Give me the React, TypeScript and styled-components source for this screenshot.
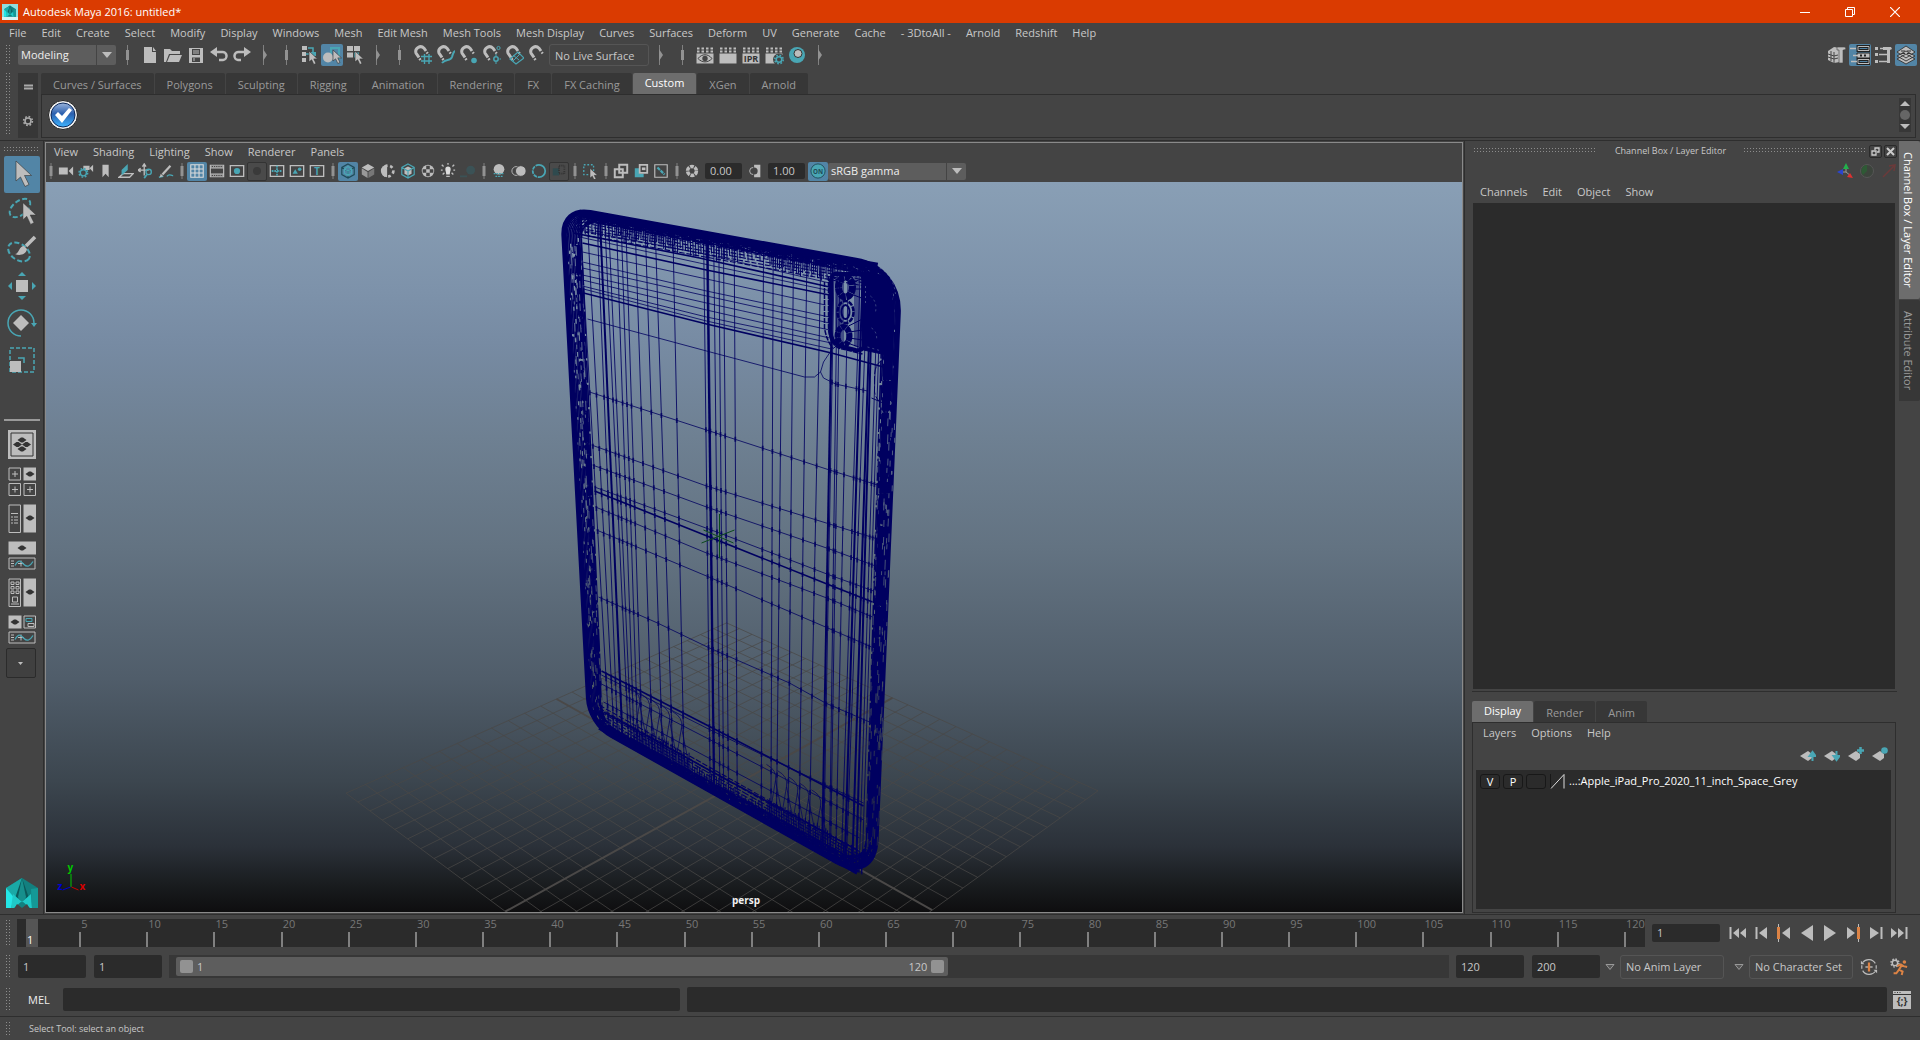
import React from "react";
import styled, { createGlobalStyle, css } from "styled-components";

const C = {
  bg: "#444444",
  dark: "#2b2b2b",
  mid: "#373737",
  raised: "#5d5d5d",
  active: "#5285a6",
  text: "#c8c8c8",
  dim: "#9a9a9a",
  icon: "#bdbdbd",
  teal: "#49a6b4",
  orange: "#dc8345",
  line: "#2e2e2e",
  wire: "#000060",
};

const Global = createGlobalStyle`
  * { box-sizing: border-box; }
  body { margin: 0; background: ${C.bg}; }
  body, button, input, select { font: 11px/16px "Open Sans", "Noto Sans", sans-serif; color: ${C.text}; }
  button, input, select { margin: 0; padding: 0; border: 0; background: none; outline: none; }
  button { cursor: default; }
  svg { display: block; }
`;

const Shell = styled.div`
  display: flex;
  flex-direction: column;
  height: 100vh;
  overflow: hidden;
  background: ${C.bg};
`;

const TitleBar = styled.header`
  display: flex;
  align-items: center;
  gap: 5px;
  height: 23px;
  padding: 0 3px 0 2px;
  background: #da3b01;
  color: #ffffff;
`;
const TitleText = styled.h1`
  flex: 1;
  margin: 0;
  font-size: 11px;
  font-weight: 400;
`;
const WindowButtons = styled.div`
  display: flex;
`;
const WindowButton = styled.button`
  display: grid;
  place-items: center;
  width: 45px;
  height: 20px;
`;

const MenuBar = styled.nav<{ $h?: number; $pad?: number }>`
  display: flex;
  align-items: center;
  gap: 15px;
  height: ${(p) => p.$h ?? 20}px;
  padding-left: ${(p) => p.$pad ?? 9}px;
`;
const MenuItem = styled.button`
  white-space: nowrap;
`;

const Row = styled.div<{ $h: number; $gap?: number; $rule?: boolean }>`
  display: flex;
  align-items: center;
  gap: ${(p) => p.$gap ?? 0}px;
  height: ${(p) => p.$h}px;
  flex: none;
  padding-right: 3px;
  border-top: ${(p) => (p.$rule ? `1px solid ${C.line}` : "0")};
`;

const dots = css`
  background: radial-gradient(circle at 0.5px 0.5px, #8c8c8c 0.5px, transparent 1px) 0 0 / 3px 3px;
`;
const Grip = styled.span<{ $h?: number }>`
  flex: none;
  width: 5px;
  height: ${(p) => p.$h ?? 20}px;
  margin: 0 6px;
  ${dots}
`;
const HGrip = styled.span`
  flex: 1;
  height: 6px;
  ${dots}
`;

const IconButton = styled.button<{ $on?: boolean; $size?: number; $w?: number }>`
  display: grid;
  place-items: center;
  flex: none;
  width: ${(p) => p.$w ?? 22}px;
  height: ${(p) => p.$size ?? 22}px;
  border-radius: 2px;
  background: ${(p) => (p.$on ? C.active : "none")};
`;

const SepBox = styled.span<{ $w: number }>`
  display: grid;
  place-items: center;
  flex: none;
  width: ${(p) => p.$w}px;
`;

const SelectBox = styled.span<{ $w: number; $h: number }>`
  position: relative;
  display: flex;
  flex: none;
  width: ${(p) => p.$w}px;
  height: ${(p) => p.$h}px;
  border-radius: 2px;
  background: ${C.raised};
  select {
    appearance: none;
    flex: 1;
    padding-left: 3px;
    color: #eeeeee;
  }
  span {
    position: absolute;
    right: 0;
    top: 0;
    display: grid;
    place-items: center;
    width: 20px;
    height: 100%;
    border-left: 1px solid ${C.bg};
    pointer-events: none;
  }
`;

const Field = styled.input<{ $w?: number; $h?: number; $outlined?: boolean }>`
  flex: ${(p) => (p.$w ? "none" : "1")};
  min-width: 0;
  width: ${(p) => (p.$w ? `${p.$w}px` : "auto")};
  height: ${(p) => p.$h ?? 23}px;
  padding: 0 5px;
  border-radius: 2px;
  background: ${C.dark};
  ${(p) =>
    p.$outlined &&
    css`
      background: none;
      border: 1px solid #555555;
      border-radius: 3px;
    `}
`;

const Spacer = styled.span`
  flex: 1;
`;

/* Shelf */
const Shelf = styled.section`
  display: flex;
  flex: none;
  height: 73px;
  padding: 6px 4px 2px 0;
`;
const ShelfSide = styled.div`
  display: flex;
  flex-direction: column;
  align-items: center;
  justify-content: space-between;
  width: 20px;
  margin: 0 3px 0 1px;
  padding: 11px 0;
  background: ${C.mid};
`;
const ShelfBody = styled.div`
  display: flex;
  flex-direction: column;
  flex: 1;
`;
const Tabs = styled.div`
  display: flex;
  align-items: flex-end;
  gap: 1px;
`;
const Tab = styled.button<{ $on?: boolean }>`
  height: 21px;
  padding: ${(p) => (p.$on ? "0 12px 1px" : "2px 12px 0")};
  border-radius: 2px 2px 0 0;
  background: ${(p) => (p.$on ? "#6d6d6d" : C.mid)};
  color: ${(p) => (p.$on ? "#ffffff" : C.dim)};
  white-space: nowrap;
`;
const ShelfBox = styled.div`
  display: flex;
  align-items: center;
  justify-content: space-between;
  flex: 1;
  padding: 0 4px 2px 5px;
  border: 1px solid ${C.line};
`;
const Scroller = styled.div`
  display: flex;
  flex-direction: column;
  align-items: center;
  justify-content: space-between;
  width: 12px;
  height: 34px;
  padding: 3px 0;
  background: ${C.mid};
`;

/* Main area */
const Main = styled.main`
  display: flex;
  flex: 1;
  min-height: 0;
  border-top: 1px solid ${C.line};
`;
const ToolBox = styled.aside`
  display: flex;
  flex-direction: column;
  align-items: center;
  width: 44px;
  padding: 6px 4px 5px;
  border-right: 1px solid ${C.line};
`;
const ToolGrip = styled(HGrip)`
  flex: none;
  width: 36px;
  margin-bottom: 3px;
`;
const Tool = styled.button<{ $on?: boolean }>`
  display: grid;
  place-items: center;
  flex: none;
  width: 36px;
  height: 37px;
  border-radius: 2px;
  background: ${(p) => (p.$on ? C.active : "none")};
`;
const ToolRule = styled.hr`
  width: 36px;
  height: 2px;
  margin: 41px 0 5px;
  border: 0;
  background: #9a9a9a;
`;
const MoreTool = styled(Tool)`
  width: 30px;
  height: 30px;
  border: 1px solid ${C.dark};
  margin-right: 2px;
  background: #404040;
`;

const Panel = styled.section`
  display: flex;
  flex-direction: column;
  flex: 1;
  min-width: 0;
  margin: 1px 0 1px 1px;
  border: 1px solid #8a8a8a;
`;
const PanelTools = styled.div`
  display: flex;
  align-items: center;
  flex: none;
  height: 21px;
  padding-bottom: 1px;
`;
const PanelIcon = styled(IconButton)<{ $framed?: boolean }>`
  width: 20px;
  height: 19px;
  ${(p) =>
    p.$framed &&
    css`
      border: 1px solid #333333;
      background: #4a4a4a;
    `}
`;
const ToolField = styled(Field)`
  width: 37px;
  height: 16px;
  margin: 0 3px;
  flex: none;
`;

const Viewport = styled.div`
  position: relative;
  flex: 1;
  min-height: 0;
  background: linear-gradient(
    #899fb5 0%,
    #7d92aa 15%,
    #778ba3 22%,
    #6e8092 35%,
    #637382 50%,
    #505d6a 68%,
    #3c464f 82%,
    #2b3139 91%,
    #1a1d20 96%,
    #0e0e0f 100%
  );
  svg {
    width: 100%;
    height: 100%;
  }
`;
const CameraName = styled.span`
  position: absolute;
  bottom: 4px;
  left: 0;
  right: 16px;
  text-align: center;
  font-weight: 700;
  font-size: 10px;
  color: #f0f0f0;
`;

/* Right dock */
const Dock = styled.aside`
  display: flex;
  flex-direction: column;
  width: 435px;
  margin-left: 1px;
  padding: 0 2px 1px 7px;
  border-left: 1px solid ${C.line};
`;
const DockHeader = styled.div`
  display: flex;
  align-items: center;
  height: 20px;
  gap: 2px;
  padding-left: 2px;
`;
const DockTitle = styled.h2`
  margin: 0 16px;
  font-size: 9px;
  font-weight: 400;
`;
const DockButton = styled.button`
  display: grid;
  place-items: center;
  width: 13px;
  height: 13px;
  border: 1px solid #2a2a2a;
  border-radius: 2px;
`;
const DockIcons = styled.div<{ $gap: number }>`
  display: flex;
  justify-content: flex-end;
  align-items: center;
  gap: ${(p) => p.$gap}px;
  height: 20px;
`;
const ChannelList = styled.div`
  flex: 1;
  margin: 0 2px 1px 1px;
  background: ${C.dark};
`;
const DockRule = styled.hr`
  width: 100%;
  height: 1px;
  margin: 1px 0 9px;
  border: 0;
  background: ${C.line};
`;
const LayerBox = styled.div`
  display: flex;
  flex-direction: column;
  height: 191px;
  margin-right: 1px;
  padding: 0 4px 3px 3px;
  border: 1px solid ${C.line};
`;
const LayerIcons = styled(DockIcons)`
  height: 27px;
  padding: 0 3px 4px 0;
`;
const LayerList = styled.div`
  flex: 1;
  padding: 3px 4px;
  background: ${C.dark};
`;
const LayerRow = styled.div`
  display: flex;
  align-items: center;
  gap: 3px;
  color: #ffffff;
`;
const LayerFlag = styled.button`
  width: 20px;
  height: 15px;
  line-height: 13px;
  border: 1px solid #181818;
  border-radius: 3px;
  color: #ffffff;
`;

const SideTabs = styled.div`
  display: flex;
  flex-direction: column;
  gap: 1px;
  width: 21px;
`;
const SideTab = styled.button<{ $on?: boolean }>`
  writing-mode: vertical-rl;
  width: 21px;
  padding: 11px 3px 11px 0;
  border-radius: 0 2px 2px 0;
  background: ${(p) => (p.$on ? "#6d6d6d" : C.mid)};
  color: ${(p) => (p.$on ? "#ffffff" : C.dim)};
`;

/* Bottom rows */
const Ruler = styled.div`
  display: grid;
  grid-template-columns: 63fr repeat(23, 67fr) 20fr;
  flex: 1;
  height: 28px;
  margin-right: 7px;
  background: ${C.dark};
`;
const Tick = styled.span`
  display: flex;
  flex-direction: column;
  min-width: 0;
  line-height: 10px;
  padding-left: 1px;
  color: #777777;
  &::after {
    content: "";
    width: 2px;
    height: 15px;
    margin: 3px 0 0 -2px;
    background: #808080;
  }
`;
const CurrentFrame = styled.span`
  width: 12px;
  height: 28px;
  margin-left: 9px;
  padding: 13px 0 0 1px;
  line-height: 15px;
  background: #555555;
  color: #ffffff;
`;
const RangeTrack = styled.div`
  flex: 1;
  height: 23px;
  margin: 0 7px;
  padding: 2px 7px;
  background: ${C.mid};
`;
const RangeBar = styled.div`
  display: flex;
  align-items: center;
  gap: 4px;
  width: 61%;
  height: 19px;
  padding: 0 4px;
  border-radius: 2px;
  background: ${C.raised};
`;
const RangeHandle = styled.button`
  width: 13px;
  height: 13px;
  border-radius: 2px;
  background: #929292;
`;
const Label = styled.label`
  width: 35px;
  margin-left: 11px;
  color: #eeeeee;
`;
const Hint = styled.p`
  margin: 0 0 0 12px;
  font-size: 9px;
`;
const Drop = styled.button`
  display: grid;
  place-items: center;
  width: 20px;
  height: 20px;
`;

/* ---------- icons ---------- */
type IconProps = { w?: number; h?: number; box?: string; children: React.ReactNode };
const Icon = ({ w = 20, h = 20, box, children }: IconProps) => (
  <svg width={w} height={h} viewBox={box ?? `0 0 ${w} ${h}`} fill="none" aria-hidden="true">
    {children}
  </svg>
);
const g = C.icon;
const t = C.teal;

const Bar = () => (
  <Icon w={5} h={20}>
    <path d="M2.5 0v20" stroke="#808080" />
    <path d="M2.5 5v10" stroke="#929292" strokeWidth="3" />
  </Icon>
);
const Fold = () => (
  <Icon w={5} h={20}>
    <path d="M1.5 0v20" stroke="#808080" />
    <path d="M1 4l4 6l-4 6z" fill="#929292" />
  </Icon>
);
const SmallBar = () => (
  <Icon w={4} h={16}>
    <path d="M2 0v16" stroke="#808080" />
    <path d="M2 3v10" stroke="#929292" strokeWidth="3" />
  </Icon>
);
const Down = ({ color = g }: { color?: string }) => (
  <Icon w={10} h={6}>
    <path d="M0 0h10l-5 6z" fill={color} />
  </Icon>
);
const Arrow = ({ x, y }: { x: number; y: number }) => (
  <path
    transform={`translate(${x} ${y})`}
    d="M0 0v11l2.600-2.200 2.200 4.700 2.200-1-2.200-4.600h3.700z"
    fill={g}
    stroke="#333"
    strokeWidth=".6"
  />
);
const Magnet = () => (
  <g transform="translate(1 0)">
    <path d="M6 12.500L3 8A4.800 4.800 0 0 1 11 3.200L13 6" stroke={g} strokeWidth="3" />
    <path d="M6.500 13.500l1 1.500M13.700 7.200l1 1.300" stroke={g} strokeWidth="2.500" />
  </g>
);
const Clap = ({ children }: { children?: React.ReactNode }) => (
  <Icon>
    <path d="M2 3.500h16M2 6.500h16" stroke={g} strokeWidth="2" strokeDasharray="2.500 2" />
    <path d="M1.500 8.500h17v10h-17z" fill={g} />
    {children}
  </Icon>
);
const Cursor = ({ s = 1 }: { s?: number }) => (
  <path
    transform={`scale(${s})`}
    d="M7 2v20l4.500-4 4.500 9.500 4-2-4.500-9h7z"
    fill={g}
    stroke="#333"
    strokeWidth=".6"
  />
);
const Gear = ({ x, y, r, color }: { x: number; y: number; r: number; color: string }) => (
  <g transform={`translate(${x} ${y})`} stroke={color}>
    <circle r={r} strokeWidth="1.600" />
    <circle r={r + 1.4} strokeWidth="1.600" strokeDasharray={`${(r + 1.4) * 0.393} ${(r + 1.4) * 0.393}`} />
  </g>
);
const Glyph = ({ x, y, size, color, children }: { x: number; y: number; size: number; color: string; children: string }) => (
  <text x={x} y={y} textAnchor="middle" fontFamily="Open Sans, sans-serif" fontWeight="700" fontSize={size} fill={color}>
    {children}
  </text>
);

const statusIcons: Record<string, React.ReactNode> = {
  "New scene": <Icon><path d="M4 2h8v5h4v11H4z" fill={g} /><path d="M13 2l3 4h-3z" fill={g} /></Icon>,
  "Open scene": <Icon><path d="M1 4h6l2 2h8v3H6l-3 8H1z" fill={g} /><path d="M7 10h12l-3 7H4z" fill={g} /></Icon>,
  "Save scene": <Icon><path d="M3 3h14v15H3z" fill={g} /><path d="M6 4h8v6H6zM6 12.500h8v4.500H6z" fill="#444" /><path d="M7 6h6M7 8h6M8 13v3" stroke={g} /></Icon>,
  Undo: <Icon><path d="M6 7h7a4 4 0 0 1 1 8h-4" stroke={g} strokeWidth="2.500" /><path d="M1 7l7-5v10z" fill={g} /></Icon>,
  Redo: <Icon><path d="M14 7H7a4 4 0 0 0-1 8h3" stroke={g} strokeWidth="2.500" /><path d="M19 7l-7-5v10z" fill={g} /></Icon>,
  Hierarchy: <Icon><path d="M3 1h5v4H3zM3 7h4v4H3zM3 13h4v4H3z" fill={g} /><path d="M9 3h5v6M7 9h4" stroke={t} strokeWidth="1.500" /><path d="M12 7h5v4h-5z" fill={t} /><Arrow x={10} y={6} /></Icon>,
  "Object mode": <Icon><path d="M9 3h8v10H9z" stroke={t} strokeWidth="2" /><circle cx="6" cy="12.500" r="5" fill={g} /><Arrow x={11} y={5} /></Icon>,
  "Component mode": <Icon><path d="M2 1h6v5H2zM9 1h6v5H9zM2 7.500h6v5H2z" fill={g} /><path d="M9 7.500h5v5H9z" fill={t} /><Arrow x={10} y={6} /></Icon>,
  "Snap to grids": <Icon><Magnet /><path d="M9 11.500h11M9 16h11M12.500 9v10M17 9v10" stroke={t} strokeWidth="1.400" /></Icon>,
  "Snap to curves": <Icon><Magnet /><path d="M7 18c4-5 8-1 10-6c1-3 1-5 3-6" stroke={t} strokeWidth="2" /></Icon>,
  "Snap to points": <Icon><Magnet /><circle cx="16" cy="15.500" r="2.800" fill={t} /></Icon>,
  "Snap to centers": <Icon><Magnet /><circle cx="17.500" cy="3" r="1.600" stroke={t} /><circle cx="15" cy="14" r="2.200" stroke={t} strokeWidth="1.500" /><path d="M15 9v2M15 17v2M18.500 14h1.500" stroke={t} /></Icon>,
  "Snap to planes": <Icon><Magnet /><path d="M6 14l8-7 6 6-8 6z" stroke={t} strokeWidth="1.200" /><path d="M9 10l6 5M16 9l-7 7" stroke={t} /></Icon>,
  "Make live": <Icon><Magnet /></Icon>,
  "Render view": <Clap><path d="M3 13.500c4-5 10-5 14 0c-4 4.500-10 4.500-14 0z" stroke="#444" /><circle cx="10" cy="13.500" r="2.700" fill="#444" /></Clap>,
  Render: <Clap />,
  "IPR render": <Clap><Glyph x={10} y={17} size={9} color="#333">IPR</Glyph></Clap>,
  "Render settings": <Clap><circle cx="15" cy="14.500" r="6" fill="#444" /><Gear x={15} y={14.500} r={2.800} color={t} /></Clap>,
  Hypershade: <Icon><circle cx="10" cy="10" r="8" fill={t} /><circle cx="11" cy="8.500" r="4" fill={g} stroke="#333" /></Icon>,
};
const dockToggles: [string, boolean, React.ReactNode][] = [
  ["Modeling toolkit", false, <Icon key="a"><path d="M1 6l6-4 6 1v14l-6 1-6-3z" fill={g} /><path d="M1 9l6 2 4-1M1 12l6 2 4-1M4 6v10M7 7v11" stroke="#444" /><path d="M10 2h8l1 2-2 1h-1v13h-4V5h-2z" fill={g} stroke="#444" strokeWidth=".6" /></Icon>],
  ["Channel box", true, <Icon key="b"><path d="M8 1.500h11v4H8zM8 14.500h11v4H8z" stroke="#222" strokeWidth="3" /><path d="M8 1.500h11v4H8zM8 14.500h11v4H8z" stroke={g} /><path d="M7 8h13v5H7z" fill={g} stroke="#222" /><path d="M0 3.500h6M3 10.500h6M1 16.500h6" stroke={g} strokeWidth="1.500" /><path d="M10 10.500h2M14 10.500h2" stroke="#222" strokeWidth="2" /></Icon>],
  ["Tool settings", false, <Icon key="c"><path d="M2 2h3v3H2zM2 8h3v3H2zM2 15h3v3H2z" fill={g} /><path d="M7 3.500h4M6 9.500h8M6 16.500h8" stroke={g} strokeWidth="1.500" /><path d="M10 2h8l1 2-2 1v13h-3V5h-4z" fill={g} /></Icon>],
  ["Layer editor", true, <Icon key="d"><path d="M1 14l9-5 9 5-9 5zM1 11l9-5 9 5-9 5zM1 7l9-6 9 6-9 6z" fill={g} stroke="#333" strokeWidth=".9" /><path d="M5 6h4M11 6h4M6 8.500h3M11 8.500h3" stroke="#333" /></Icon>],
];

const Cube = ({ c, f }: { c: string; f?: string }) => (
  <path d="M9 1l7 4v8l-7 4-7-4V5zM2 5l7 4 7-4M9 9v8" stroke={c} strokeWidth="1.300" fill={f ?? "none"} />
);
const P = ({ children }: { children: React.ReactNode }) => <Icon w={16} h={16} box="0 0 18 18">{children}</Icon>;
const Gate = ({ children }: { children?: React.ReactNode }) => (
  <P><path d="M1.500 3h15v12h-15z" stroke={g} strokeWidth="1.500" />{children}</P>
);
type PI = [string, React.ReactNode, string?];
const panelIcons: (PI | null)[] = [
  ["Select camera", <P key="1"><path d="M1 5h10v8H1zM12 9l5-5v10z" fill={g} /></P>],
  ["Camera attributes", <P key="1"><path d="M6 3h7v5H6zM13 6l4-4v8z" fill={g} /><Gear x={6} y={11} r={3.500} color={t} /></P>],
  ["Bookmark", <P key="1"><path d="M5 2h7v14l-3.500-4L5 16z" fill={g} /></P>],
  ["Image plane", <P key="1"><path d="M1 16l5-4h11l-4 4z" stroke={g} strokeWidth="1.500" /><path d="M4 14l7-6V1L4 8z" fill={t} /></P>],
  ["Pan and zoom", <P key="1"><path d="M7 2v12M1 8h11M5 4l2-3 2 3M3 6L0 8l3 2" stroke={g} strokeWidth="1.500" /><circle cx="12" cy="10" r="3" stroke={t} strokeWidth="1.500" /><path d="M10 13l-3 4" stroke={t} strokeWidth="2" /></P>],
  ["Grease pencil", <P key="1"><path d="M14 3L5 13" stroke={g} strokeWidth="2.500" /><path d="M1 16l5-1M10 15c3-4 5 0 7-1" stroke={t} strokeWidth="1.500" /><path d="M2 16l1-4 3 3z" fill={g} /></P>],
  null,
  ["Grid", <P key="1"><path d="M2 2h14v14H2zM6.700 2v14M11.300 2v14M2 6.700h14M2 11.300h14" stroke="#ddd" strokeWidth="1.200" /></P>, "on"],
  ["Film gate", <P key="1"><path d="M1.500 2.500h15v13h-15zM2 5.500h14M2 12.500h14" stroke={g} strokeWidth="1.300" /><path d="M2 4h14M2 14h14" stroke={g} strokeDasharray="1 1.500" /></P>],
  ["Resolution gate", <Gate key="1"><circle cx="9" cy="9" r="3.500" fill={t} /></Gate>],
  ["Gate mask", <P key="1"><circle cx="9" cy="9" r="4.500" fill="#3a3a3a" /></P>, "framed"],
  ["Field chart", <Gate key="1"><path d="M9 3v12M3 9h12" stroke={t} strokeWidth="2" strokeDasharray="2 1" /></Gate>],
  ["Safe action", <Gate key="1"><path d="M4 12l3-5 3 5z" fill={t} /><circle cx="12" cy="7" r="2" fill={t} /></Gate>],
  ["Safe title", <Gate key="1"><Glyph x={9} y={13} size={11} color={t}>T</Glyph></Gate>],
  null,
  ["Wireframe", <P key="1"><Cube c="#1f4b57" /><path d="M9 4l4 2.500v5L9 14l-4-2.500v-5zM5 6.500L9 9l4-2.500M9 9v5" stroke={t} strokeWidth="1.300" /></P>, "on"],
  ["Smooth shade", <P key="1"><path d="M9 1l7 4-7 4-7-4z" fill={g} /><path d="M2 6l6.500 4v7L2 13z" fill="#999" /><path d="M16 6l-6.500 4v7l6.500-4z" fill="#777" /></P>],
  ["Default material", <P key="1"><path d="M8 2a7 7 0 0 0 0 14z" fill={g} /><circle cx="9" cy="9" r="6" stroke={g} strokeWidth="3" strokeDasharray="3 3" /></P>],
  ["Wireframe on shaded", <P key="1"><path d="M5 6l4-2 4 2v6l-4 2-4-2z" fill={g} /><Cube c={t} /></P>],
  ["Textured", <P key="1"><circle cx="9" cy="9" r="7" fill={g} /><path d="M7 3h4v4H7zM3 7h4v4H3zM11 7h4v4h-4zM7 11h4v4H7z" fill="#444" /></P>],
  ["Use all lights", <P key="1"><path d="M6 7a3 3 0 1 1 6 0c0 2-1 3-1 6H7c0-3-1-4-1-6z" fill="#ddd" /><path d="M9 0v2M2 2l2 2M16 2l-2 2M1 8h2M15 8h2M3 13l2-2M15 13l-2-2M7 15h4" stroke={g} strokeWidth="1.500" /></P>],
  ["Shadows", <P key="1"><circle cx="12" cy="8" r="5" fill="#3b5256" /><path d="M0 15h8" stroke="#3b5256" strokeWidth="2" /></P>],
  null,
  ["Ambient occlusion", <P key="1"><circle cx="9" cy="7" r="6" fill={g} /><path d="M3 12h12M5 15h8" stroke={t} strokeWidth="1.500" strokeDasharray="2 1" /></P>],
  ["Motion blur", <P key="1"><circle cx="6" cy="9" r="5" stroke={g} /><circle cx="11" cy="9" r="6" fill={g} stroke="#444" /></P>],
  ["Anti-aliasing", <P key="1"><path d="M9 2a7 7 0 0 0 0 14" stroke={t} strokeWidth="2" strokeDasharray="4 1" /><path d="M9 2a7 7 0 0 1 0 14" stroke={t} strokeWidth="2" /></P>],
  ["Depth of field", <P key="1"><path d="M2 6h7v8H2z" fill="#2f4a4e" /><path d="M9 3h6v9H9z" stroke="#333" strokeWidth="2" strokeDasharray="1 1" /></P>, "framed"],
  null,
  ["Isolate select", <P key="1"><path d="M2 2h11v11H2z" stroke={t} strokeWidth="1.500" strokeDasharray="2 2" /><Arrow x={9} y={6} /></P>],
  null,
  ["X-ray", <P key="1"><path d="M2 7h9v9H2zM7 2h9v9H7z" stroke={g} strokeWidth="2.200" /></P>],
  ["X-ray joints", <P key="1"><path d="M2 6v10h10v-4H7V6z" fill={t} /><path d="M7.500 2h8.500v9H7.500z" stroke={g} strokeWidth="2" /><path d="M10 5h4v3h-4z" fill={g} /></P>],
  ["X-ray components", <P key="1"><path d="M2 2h14v14H2z" stroke={g} strokeWidth="1.300" /><path d="M5 5l8 8" stroke={t} strokeWidth="2.500" strokeDasharray="4 1" /></P>],
  null,
];

const playback: [string, React.ReactNode][] = [
  ["Go to start", <><path d="M2.500 4v12" stroke={g} strokeWidth="2" /><path d="M11 5v10l-6-5zM18 5v10l-6-5z" fill={g} /></>],
  ["Step back frame", <><path d="M5.500 4v12" stroke={g} strokeWidth="2" /><path d="M16 4v12l-8-6z" fill={g} /></>],
  ["Step back key", <><path d="M4.500 1v18" stroke={g} strokeWidth="1" /><path d="M4.500 4v12" stroke={C.orange} strokeWidth="3" /><path d="M16 4v12l-8-6z" fill={g} /></>],
  ["Play backwards", <path key="p" d="M16 2v16l-12-8z" fill={g} />],
  ["Play forwards", <path key="p" d="M4 2v16l12-8z" fill={g} />],
  ["Step forward key", <><path d="M15.500 1v18" stroke={g} strokeWidth="1" /><path d="M15.500 4v12" stroke={C.orange} strokeWidth="3" /><path d="M4 4v12l8-6z" fill={g} /></>],
  ["Step forward frame", <><path d="M15.500 4v12" stroke={g} strokeWidth="2" /><path d="M4 4v12l9-6z" fill={g} /></>],
  ["Go to end", <><path d="M17.500 4v12" stroke={g} strokeWidth="2" /><path d="M2 5v10l6-5zM9 5v10l6-5z" fill={g} /></>],
];

const Diamond = ({ x, y }: { x: number; y: number }) => (
  <path transform={`translate(${x} ${y})`} d="M-4.500 0L-1 -2.500h2L4.500 0L1 2.500h-2z" fill="#333" />
);
const Wave = ({ y }: { y: number }) => (
  <g transform={`translate(0 ${y})`}>
    <path d="M1 .500h26v11H1z" stroke={g} />
    <path d="M3 3.500h3M3 6h3M3 8.500h3M10 6h6M13 3v6" stroke={g} />
    <path d="M7 8c4-7 6-4 9-1s6 2 9-3" stroke={t} strokeWidth="1.300" />
  </g>
);
const layouts: [string, React.ReactNode][] = [
  ["Single perspective view", <><path d="M0 0h28v29H0z" fill={g} /><path d="M3 3h22v23H3z" stroke="#333" /><Diamond x={14} y={10} /><Diamond x={9.500} y={14.500} /><Diamond x={18.500} y={14.500} /><Diamond x={14} y={19} /></>],
  ["Four view", <><path d="M1 1h11.500v12H1zM1 16.500h11.500v12H1zM16 16.500h11.500v12H16z" stroke={g} /><path d="M15.500.500h12.500v13H15.500z" fill={g} /><path d="M7 4v6M4 7h6M7 19.500v6M4 22.500h6M22 19.500v6M19 22.500h6" stroke={g} /><Diamond x={22} y={7} /></>],
  ["Outliner and perspective", <><path d="M1 1h11.500v27.500H1z" stroke={g} /><path d="M15.500.500h12.500v28H15.500z" fill={g} /><path d="M3 9.500h7M3 13h2M6 13h4M3 16h2M6 16h4M3 19h2M6 19h4" stroke={g} /><Diamond x={22} y={14} /></>],
  ["Perspective and graph", <><path d="M.500.500h27.500v13H.500z" fill={g} /><Diamond x={14} y={7} /><Wave y={16.500} /></>],
  ["Hypershade and perspective", <><path d="M1 1h11.500v27.500H1z" stroke={g} /><path d="M15.500.500h12.500v28H15.500z" fill={g} /><path d="M3 4h3v2.500H3zM8 4h3v2.500H8zM3 8.500h3V11H3zM8 8.500h3V11H8zM3 13h3v2.500H3zM8 13h3v2.500H8zM4.500 19h5v5h-5zM3 26h8" stroke={g} /><Diamond x={22} y={14} /></>],
  ["Perspective, hypergraph and graph", <><path d="M.500.500h13v13H.500z" fill={g} /><Diamond x={7} y={7} /><path d="M16 1h11.500v12H16z" stroke={g} /><path d="M18 3.500h6v3h-6z" stroke={t} /><path d="M20 8.500h6v3h-6z" stroke={g} /><Wave y={16.500} /></>],
];

const LogoShape = () => (
  <>
    <path d="M0 11L16 1l16 10v20H0z" fill="#12807f" />
    <path d="M0 11l7-1v15l-2 6H0z" fill="#24e6e6" />
    <path d="M16 1L0 11l11 13z" fill="#1aa9a6" />
    <path d="M16 1L8 24l8-6 8 6z" fill="#0b5a5a" />
    <path d="M16 1l-4 19 4 6 4-6z" fill="#178f8c" />
    <path d="M7 17l9 8 9-8 1 14h-2l-8-7-8 7H5z" fill="#1fc9c7" />
    <path d="M25 12l7-1v20h-6z" fill="#149896" />
  </>
);
const Logo = () => (
  <Icon w={32} h={32}>
    <LogoShape />
    <path d="M8 32l3-5 5 4 5-4 3 5z" fill={C.bg} />
  </Icon>
);
const AppIcon = () => (
  <Icon w={16} h={16} box="0 0 32 32">
    <path d="M0 0h32v32H0z" fill="#8fdede" />
    <g transform="translate(4 2) scale(.75)"><LogoShape /></g>
    <path d="M0 26h32v6H0z" fill="#d8f2f2" />
  </Icon>
);

/* ---------- 3D view ---------- */
type Pt = [number, number];
const lerp = (a: Pt, b: Pt, k: number): Pt => [a[0] + (b[0] - a[0]) * k, a[1] + (b[1] - a[1]) * k];
const n = (v: number) => v.toFixed(1);
const seg = (a: Pt, b: Pt) => `M${n(a[0])} ${n(a[1])}L${n(b[0])} ${n(b[1])}`;

/* Ground plane: the projective map of the unit square (centre, two edge middles, far corner). */
const ground = (u: number, v: number): Pt => {
  const w = 1 + 0.119 * (u + v);
  return [(276.8 * u - 99.2 * v + 722.5) / w, (-11 * u - 9.8 * v + 792) / w];
};
const gridPath = Array.from({ length: 25 }, (_, i) => (i - 12) / 12)
  .filter((k) => k !== 0)
  .map((k) => seg(ground(k, -1), ground(k, 1)) + seg(ground(-1, k), ground(1, k)))
  .join("");
const axisPath = seg(ground(0, -1), ground(0, 1)) + seg(ground(-1, 0), ground(1, 0));

/* Rounded contours of the tablet body, from the silhouette inwards. */
const outer: Pt[] = [[561.500, 206], [902, 267], [876, 885], [589, 724]];
const inner: Pt[] = [[581, 220], [884, 277], [866, 866], [603, 723]];
const radii = [30, 46, 46, 26];
const contour = (k: number) => {
  const q = outer.map((p, i) => lerp(p, inner[i], k));
  return (
    q
      .map((p, i) => {
        const prev = q[(i + 3) % 4];
        const next = q[(i + 1) % 4];
        const r = radii[i] * (1 - k * 0.4);
        const a = lerp(p, prev, r / Math.hypot(prev[0] - p[0], prev[1] - p[1]));
        const b = lerp(p, next, r / Math.hypot(next[0] - p[0], next[1] - p[1]));
        const c1 = lerp(a, p, 0.6);
        const c2 = lerp(b, p, 0.6);
        return `${i ? "L" : "M"}${n(a[0])} ${n(a[1])}C${n(c1[0])} ${n(c1[1])} ${n(c2[0])} ${n(c2[1])} ${n(b[0])} ${n(b[1])}`;
      })
      .join("") + "Z"
  );
};
const contours = Array.from({ length: 13 }, (_, i) => i / 12);

const topEdge = (x: number) => 211 + (x - 590) * 0.181 + Math.max(0, x - 868) * 0.35;
const bottomEdge = (x: number) => 732 + (x - 603) * 0.5625;

/* Lengthwise edges: x at y=357, x at y=607, line weight. */
const lengthwise: [number, number, number][] = [
  [588.3, 602.5, 1], [595, 608, 1], [603, 613, 1], [606.5, 617.3, 2], [611.5, 623, 1], [615, 626, 1], [621.5, 630, 1],
  [626, 634, 1], [630.5, 638.3, 1], [640, 648.3, 1], [650, 658.3, 1], [660, 668.3, 1], [676, 681.3, 1],
  [705.5, 708.5, 1], [709, 712.2, 2], [710, 713, 1], [715.5, 718.3, 1], [720.3, 722.5, 1], [725, 727.3, 1], [735.3, 736.7, 1],
  [763.6, 762.6, 1], [773.3, 772.3, 1], [782, 779.3, 1], [793, 790.6, 1], [806, 802.6, 1], [819.3, 814.3, 1],
  [831.5, 827, 2], [833, 828.5, 1], [836.6, 833.3, 1], [839, 835, 1], [847, 841.6, 1], [858, 850, 1], [860.6, 853, 2],
  [865, 856, 1], [869, 861, 2], [871, 864, 2], [876, 868, 1], [879, 871, 1],
];
const lengthLines = lengthwise.map(([a, b, w]) => {
  const at = (y: number) => a + ((b - a) * (y - 357)) / 250;
  const y0 = topEdge(at(240)) + 6;
  const y1 = bottomEdge(at(780)) - 5;
  return { d: seg([at(y0), y0], [at(y1), y1]), w, at };
});

/* Crosswise edges. */
const crosswise: [Pt[], number][] = [
  [[[570, 228], [700, 253], [830, 283]], 1], [[[574, 233], [700, 258], [830, 287]], 2], [[[580, 237], [700, 263], [832, 291]], 1],
  [[[583, 243], [707, 270], [830, 295]], 2], [[[583, 252], [707, 279], [826, 305]], 1], [[[583, 262], [707, 291], [830, 317]], 1],
  [[[583, 268], [707, 296], [830, 323]], 1], [[[583, 275], [707, 303], [830, 330]], 1], [[[583, 280], [707, 310], [830, 338]], 1],
  [[[583, 286], [707, 317], [832, 343]], 1], [[[584, 289], [707, 321], [832, 349]], 1], [[[584, 293], [707, 324], [832, 353], [884, 367]], 2],
  [[[588, 319], [707, 351], [805, 377], [815, 377], [821, 372], [824, 362], [832, 350]], 1],
  [[[821, 372], [824, 378], [836, 384], [868, 391]], 1],
  [[[590, 392], [707, 430], [830, 470], [878, 485]], 1], [[[592, 445], [707, 486], [830, 524], [878, 539]], 1],
  [[[593, 465], [707, 507], [830, 549], [876, 566]], 1], [[[595, 487], [720, 533], [830, 575], [874, 591]], 1],
  [[[595, 491], [720, 541], [830, 585], [873, 602]], 2], [[[596, 507], [707, 553], [830, 599], [873, 617]], 1],
  [[[597, 530], [707, 576], [826, 627], [872, 647]], 1], [[[599, 597], [658, 623], [710, 648], [790, 683], [826, 703], [870, 722]], 1],
  [[[602, 671], [713, 728], [864, 806]], 2], [[[602, 675], [713, 731], [864, 803]], 1], [[[602, 684], [713, 741], [864, 820]], 1],
  [[[604, 702], [713, 760], [860, 838]], 1], [[[604, 712], [713, 772], [858, 850]], 2],
];
const poly = (pts: Pt[]) => "M" + pts.map((p) => `${p[0]} ${p[1]}`).join("L");
const yOn = (pts: Pt[], x: number) => {
  for (let i = 1; i < pts.length; i++) {
    const [x0, y0] = pts[i - 1];
    const [x1, y1] = pts[i];
    if (x >= x0 && x <= x1) return y0 + ((y1 - y0) * (x - x0)) / (x1 - x0);
  }
  return null;
};
/* Vertices where the edges meet read as short heavier strokes. */
const vertices = crosswise
  .filter(([pts]) => pts[0][1] > 300 && pts.length < 7)
  .flatMap(([pts]) =>
    lengthLines.map((l) => {
      const y = yOn(pts, l.at(pts[1][1]));
      return y === null ? "" : seg([l.at(y), y - 2.5], [l.at(y), y + 2.5]);
    })
  )
  .join("");

/* Fine hatching of button and port geometry along the short sides. */
const rand = (i: number) => {
  const s = Math.sin(i * 127.1) * 43758.5453;
  return s - Math.floor(s);
};
const hatch = (from: number, to: number, step: number, edge: (x: number) => number, a: number, b: number) => {
  let d = "";
  for (let x = from, i = 1; x < to; x += step, i++) {
    const y = edge(x);
    const k = rand(i + from);
    d += seg([x, y + a], [x + 0.6, y + b * (0.7 + k * 0.3)]);
  }
  return d;
};
const topHatch =
  hatch(575, 615, 3.4, topEdge, 4, 30) + hatch(615, 675, 1.8, topEdge, 4, 26) + hatch(675, 740, 2.6, topEdge, 4, 28) +
  hatch(740, 770, 4, topEdge, 4, 22) + hatch(770, 832, 1.9, topEdge, 4, 28) + hatch(832, 884, 3, topEdge, 4, 22);
const bottomHatch =
  hatch(604, 635, 3, bottomEdge, -2, -18) + hatch(635, 690, 1.5, bottomEdge, -2, -28) + hatch(690, 735, 2.4, bottomEdge, -2, -22) +
  hatch(735, 768, 3.4, bottomEdge, -2, -20) + hatch(768, 828, 1.7, bottomEdge, -2, -30) + hatch(828, 862, 2.6, bottomEdge, -4, -28);
const strips = [8, 10, 13, 16, 19, 22, 25].map((o) => ({
  top: seg([578, topEdge(578) + o], [878, topEdge(868) + o + 2]),
  bottom: seg([600, bottomEdge(600) - o], [860, bottomEdge(860) - o]),
  dash: `${3 + rand(o) * 6} ${1 + rand(o + 3) * 2}`,
}));
const arches = [642, 652, 662, 672, 684, 778, 789, 800, 811, 823]
  .map((x) => {
    const y = bottomEdge(x) - 22;
    return `M${x - 6} ${y - 4}L${x - 2} ${y - 28}Q${x} ${y - 38} ${x - 11} ${y - 44}M${x - 2} ${y - 28}L${x + 4} ${y + 2}`;
  })
  .join("");

/* Gaps that stay open between the tightly packed edges of the long sides. */
const gaps = (x0: number, x1: number, y0: number, y1: number, width: number, count: number) => {
  let d = "";
  for (let i = 0; i < count; i++) {
    const y = y0 + (y1 - y0) * rand(i * 3 + x0);
    const k = (y - y0) / (y1 - y0);
    const x = x0 + (x1 - x0) * k + width * rand(i * 7 + x0);
    const len = 3 + 7 * rand(i * 11 + x0);
    const slope = ((x1 - x0) / (y1 - y0)) * len;
    d += seg([x, y], [x + slope, y + len]);
  }
  return d;
};
const gapPath = gaps(570, 594, 245, 705, 9, 120) + gaps(888, 870, 400, 840, 9, 100) + gaps(877, 864, 400, 840, 5, 60);

const Scene = () => (
  <svg viewBox="46 182 1417 730" preserveAspectRatio="xMidYMid slice" fill="none" role="img" aria-label="Perspective view of the tablet wireframe">
    <defs>
      <linearGradient id="haze" gradientUnits="userSpaceOnUse" x1="0" y1="182" x2="0" y2="912">
        <stop offset="0" stopColor="#899fb5" />
        <stop offset=".5" stopColor="#637382" />
        <stop offset="1" stopColor="#202428" />
      </linearGradient>
    </defs>
    <path d={gridPath} stroke="#4a4847" strokeWidth="1" opacity=".75" />
    <path d={axisPath} stroke="#4a4847" strokeWidth="2" />
    <g stroke={C.wire}>
      {contours.map((k, i) => (
        <path key={k} d={contour(k)} strokeWidth={i < 3 ? 2.4 : 1.6} strokeDasharray={i < 3 ? undefined : `${12 + rand(i) * 30} ${1 + rand(i + 9) * 4}`} />
      ))}
      <path d="M578 245L600 700" strokeWidth="5" strokeDasharray="30 2 9 1" />
      <path d="M891 300L872 840" strokeWidth="9" strokeDasharray="80 1 30 2" />
      <path d={seg([580, topEdge(580) + 4], [878, topEdge(868) + 5])} strokeWidth="7" />
      <path d={seg([600, bottomEdge(600) - 3], [858, bottomEdge(858) - 3])} strokeWidth="5" strokeDasharray="40 1 12 1" />
    </g>
    <path d={gapPath} stroke="url(#haze)" strokeWidth=".9" opacity=".8" />
    <g stroke={C.wire}>
      {lengthLines.map((l, i) => (
        <path key={i} d={l.d} strokeWidth={l.w} opacity={l.w === 1 ? 0.85 : 1} />
      ))}
      {crosswise.map(([pts, w], i) => (
        <path key={i} d={poly(pts)} strokeWidth={w === 2 ? 1.6 : 0.8} />
      ))}
      <path d={vertices} strokeWidth="1.800" opacity=".8" />
      <path d={topHatch} strokeWidth="1" />
      <path d={bottomHatch} strokeWidth="1" />
      {strips.map((s, i) => (
        <g key={i} strokeWidth="1.100" strokeDasharray={s.dash}>
          <path d={s.top} />
          <path d={s.bottom} />
        </g>
      ))}
      <path d={arches} strokeWidth=".7" />
      <path d="M835 274h26q3 0 3 8v64q0 5-8 4l-16-4q-9-4-9-16v-46q0-8 4-10z" strokeWidth="4" />
      <path d="M836 276h8v70l-8-4zM855 276h5v70h-5z" fill={C.wire} opacity=".45" />
      <path d="M829 276v50q0 16 10 22l24 6M825 282v46q2 12 8 20" strokeWidth="1.500" strokeDasharray="5 1" />
      <path d="M864 272l18 4q10 6 10 22v58l-28-6z" fill={C.wire} />
      <ellipse cx="846" cy="287" rx="7" ry="10" strokeWidth="7" strokeDasharray="6 .500" />
      <ellipse cx="846" cy="312" rx="8" ry="11" strokeWidth="2.500" strokeDasharray="5 1" />
      <ellipse cx="846" cy="312" rx="4" ry="7" strokeWidth="2" />
      <ellipse cx="844" cy="336" rx="6" ry="9" strokeWidth="6" strokeDasharray="5 .500" />
      <path d="M848 284l14-5M850 289l13 0M849 293l13 5M849 326l14-7M850 332l13-2M850 338l13 2M848 343l14 5M838 280l-6-3M838 345l-5 4" />
      <path d="M884 360q-9 2-9 18v14q2 10 10 12M872 398l14 6M884 372v40" strokeDasharray="8 2" />
    </g>
    <g stroke="#7f93ab" strokeWidth=".8" opacity=".6">
      <path d="M871 296q7 6 5 16M872 328q6 4 5 12M868 347l14 4M866 286v20M880 268q14 8 16 26M884 264q14 9 15 30" strokeDasharray="2 3" />
    </g>
    <path d="M720 514v44M702 543l33-13M704 530l30 13" stroke="#0b4a1c" />
    <g strokeWidth="1">
      <path d="M71.500 874v13" stroke="#00c800" />
      <path d="M71 887l-8 3" stroke="#0000d8" />
      <path d="M72 887l7 3" stroke="#c80000" />
    </g>
    <g fontFamily="Open Sans, sans-serif" fontSize="10" fontWeight="700">
      <text x="68" y="871" fill="#00c800">y</text>
      <text x="58" y="890" fill="#0000d8">z</text>
      <text x="80" y="890" fill="#d80000">x</text>
    </g>
  </svg>
);

/* ---------- data ---------- */
const menus = ["File", "Edit", "Create", "Select", "Modify", "Display", "Windows", "Mesh", "Edit Mesh", "Mesh Tools", "Mesh Display", "Curves", "Surfaces", "Deform", "UV", "Generate", "Cache", "- 3DtoAll -", "Arnold", "Redshift", "Help"];
const shelves = ["Curves / Surfaces", "Polygons", "Sculpting", "Rigging", "Animation", "Rendering", "FX", "FX Caching", "Custom", "XGen", "Arnold"];
const group = (names: string[], on?: string) =>
  names.map((name) => (
    <IconButton key={name} aria-label={name} $on={name === on}>
      {statusIcons[name]}
    </IconButton>
  ));
const names = Object.keys(statusIcons);
const frames = Array.from({ length: 24 }, (_, i) => (i + 1) * 5);

const Menu = ({ items, h, pad }: { items: string[]; h?: number; pad?: number }) => (
  <MenuBar $h={h} $pad={pad}>
    {items.map((m) => (
      <MenuItem key={m}>{m}</MenuItem>
    ))}
  </MenuBar>
);
const TabRow = ({ items, on }: { items: string[]; on: string }) => (
  <Tabs role="tablist">
    {items.map((s) => (
      <Tab key={s} role="tab" aria-selected={s === on} $on={s === on}>
        {s}
      </Tab>
    ))}
  </Tabs>
);

export default function App() {
  return (
    <Shell>
      <Global />
      <TitleBar>
        <AppIcon />
        <TitleText>Autodesk Maya 2016: untitled*</TitleText>
        <WindowButtons>
          <WindowButton aria-label="Minimize"><Icon w={10} h={10}><path d="M0 5.500h10" stroke="#fff" /></Icon></WindowButton>
          <WindowButton aria-label="Restore"><Icon w={10} h={10}><path d="M.500 2.500h7v7h-7zM2.500 2.500v-2h7v7h-2" stroke="#fff" /></Icon></WindowButton>
          <WindowButton aria-label="Close"><Icon w={10} h={10}><path d="M0 0l10 10M10 0L0 10" stroke="#fff" strokeWidth="1.200" /></Icon></WindowButton>
        </WindowButtons>
      </TitleBar>
      <Menu items={menus} />

      <Row $h={24} $gap={1}>
        <Grip />
        <SelectBox $w={98} $h={20}>
          <select aria-label="Menu set"><option>Modeling</option></select>
          <span><Down /></span>
        </SelectBox>
        <SepBox $w={21}><Bar /></SepBox>
        {group(names.slice(0, 5))}
        <SepBox $w={21}><Fold /></SepBox>
        <SepBox $w={21}><Bar /></SepBox>
        {group(names.slice(5, 8), "Object mode")}
        <SepBox $w={21}><Fold /></SepBox>
        <SepBox $w={21}><Bar /></SepBox>
        {group(names.slice(8, 14))}
        <Field aria-label="Live surface" defaultValue="No Live Surface" $w={100} $h={22} $outlined />
        <SepBox $w={21}><Fold /></SepBox>
        <SepBox $w={21}><Bar /></SepBox>
        {group(names.slice(14))}
        <SepBox $w={21}><Fold /></SepBox>
        <Spacer />
        {dockToggles.map(([name, on, icon]) => (
          <IconButton key={name} aria-label={name} $on={on}>{icon}</IconButton>
        ))}
      </Row>

      <Shelf>
        <Grip $h={62} />
        <ShelfSide>
          <button aria-label="Shelf tabs"><Icon w={9} h={6}><path d="M0 1.500h9M0 4.500h9" stroke="#aaa" strokeWidth="2" /></Icon></button>
          <button aria-label="Shelf settings"><Icon w={12} h={12}><Gear x={6} y={6} r={3} color="#aaa" /></Icon></button>
        </ShelfSide>
        <ShelfBody>
          <TabRow items={shelves} on="Custom" />
          <ShelfBox>
            <button aria-label="Confirm script">
              <Icon w={32} h={32}>
                <defs>
                  <linearGradient id="ball" x1="0" y1="0" x2="0" y2="1">
                    <stop offset="0" stopColor="#9ab4dc" />
                    <stop offset=".45" stopColor="#2a5fae" />
                    <stop offset="1" stopColor="#3fb4ff" />
                  </linearGradient>
                </defs>
                <circle cx="16" cy="16" r="14.500" fill="#eee" stroke="#222" />
                <circle cx="16" cy="16" r="12" fill="url(#ball)" stroke="#0d2a5c" />
                <path d="M8 16l3-3 4 4 7-8 3 2-10 13z" fill="#fff" />
              </Icon>
            </button>
            <Scroller>
              <Icon w={10} h={5}><path d="M0 5h10L5 0z" fill={g} /></Icon>
              <Icon w={10} h={10}><circle cx="5" cy="5" r="5" fill="#666" /></Icon>
              <Icon w={10} h={5}><path d="M0 0h10L5 5z" fill={g} /></Icon>
            </Scroller>
          </ShelfBox>
        </ShelfBody>
      </Shelf>

      <Main>
        <ToolBox>
          <ToolGrip />
          <Tool aria-label="Select tool" $on><Icon w={32} h={32} box="-3 0 32 32"><Cursor /></Icon></Tool>
          <Tool aria-label="Lasso tool"><Icon w={30} h={30} box="-1 0 30 30"><ellipse cx="12" cy="11" rx="12" ry="7" transform="rotate(-38 12 11)" stroke={t} strokeWidth="2" strokeDasharray="5 2.500" /><g transform="translate(9 4)"><Cursor s={0.85} /></g></Icon></Tool>
          <Tool aria-label="Paint selection tool"><Icon w={30} h={30}><ellipse cx="12" cy="18" rx="12" ry="8" transform="rotate(35 12 18)" stroke={t} strokeWidth="2" strokeDasharray="5 2.500" /><path d="M28 3l-9 9" stroke={g} strokeWidth="3.500" /><path d="M8 20c4 0 4-8 9-8l3 3c-1 6-8 7-12 5z" fill={g} /></Icon></Tool>
          <Tool aria-label="Move tool"><Icon w={30} h={30}><path d="M9 9h12v12H9z" fill={g} /><path d="M15 1l4 4h-8zM15 29l4-4h-8zM1 15l4-4v8zM29 15l-4-4v8z" fill={t} /></Icon></Tool>
          <Tool aria-label="Rotate tool"><Icon w={32} h={30}><path d="M15 28A13 13 0 1 1 28 15" stroke={t} strokeWidth="1.500" /><path d="M25 15h6l-3 4z" fill={t} /><path d="M15 7l8 8-8 8-8-8z" fill={g} /></Icon></Tool>
          <Tool aria-label="Scale tool"><Icon w={26} h={26}><path d="M1 1h24v24H1z" stroke={t} strokeWidth="1.500" strokeDasharray="4 2" /><path d="M9 11h6v5" stroke={t} strokeWidth="1.500" /><path d="M1 14h11v11H1z" fill={g} /></Icon></Tool>
          <ToolRule />
          {layouts.map(([name, icon]) => (
            <Tool key={name} aria-label={name}><Icon w={28} h={29}>{icon}</Icon></Tool>
          ))}
          <MoreTool aria-label="More layouts"><Icon w={5} h={3}><path d="M0 0h5L2.500 3z" fill={g} /></Icon></MoreTool>
          <Spacer />
          <Logo />
        </ToolBox>

        <Panel>
          <Menu items={["View", "Shading", "Lighting", "Show", "Renderer", "Panels"]} h={18} pad={8} />
          <PanelTools>
            <SepBox $w={10}><SmallBar /></SepBox>
            {panelIcons.map((p, i) =>
              p ? (
                <PanelIcon key={i} aria-label={p[0]} $on={p[2] === "on"} $framed={p[2] === "framed"}>{p[1]}</PanelIcon>
              ) : (
                <SepBox key={i} $w={11}><SmallBar /></SepBox>
              )
            )}
            <PanelIcon aria-label="Exposure"><P><circle cx="9" cy="9" r="5" stroke={g} strokeWidth="4" strokeDasharray="4.200 1" /></P></PanelIcon>
            <ToolField aria-label="Exposure value" defaultValue="0.00" />
            <PanelIcon aria-label="Gamma"><P><path d="M8 2h7v14H8v-3a4 4 0 0 0 0-8z" fill={g} /><path d="M7 5a4 4 0 0 0 0 8" stroke={g} /></P></PanelIcon>
            <ToolField aria-label="Gamma value" defaultValue="1.00" />
            <PanelIcon aria-label="Colour management" $on><P><circle cx="9" cy="9" r="8" fill={t} stroke="#1f4b57" /><Glyph x={9} y={12} size={7} color="#1f4b57">ON</Glyph></P></PanelIcon>
            <SelectBox $w={138} $h={17}>
              <select aria-label="View transform"><option>sRGB gamma</option></select>
              <span><Down /></span>
            </SelectBox>
          </PanelTools>
          <Viewport>
            <Scene />
            <CameraName>persp</CameraName>
          </Viewport>
        </Panel>

        <Dock>
          <DockHeader>
            <HGrip />
            <DockTitle>Channel Box / Layer Editor</DockTitle>
            <HGrip />
            <DockButton aria-label="Float"><Icon w={9} h={9}><path d="M1 4h4v4H1zM4 3V1h4v4H6" stroke="#ccc" strokeWidth="1.300" /></Icon></DockButton>
            <DockButton aria-label="Close dock"><Icon w={9} h={9}><path d="M1 1l7 7M8 1L1 8" stroke="#ccc" strokeWidth="2" /></Icon></DockButton>
          </DockHeader>
          <DockIcons $gap={6}>
            <button aria-label="Manipulator"><Icon w={16} h={16}><path d="M9 9V3M9 9l5 4M9 9H3" stroke="#999" /><path d="M9 0l3 6H6z" fill="#22b14c" /><path d="M0 9l6-3v6z" fill="#2b45d0" /><path d="M16 15l-6-1 3-4z" fill="#e03030" /></Icon></button>
            <button aria-label="Speed"><Icon w={16} h={16}><circle cx="8" cy="8" r="6.500" fill="#3c443c" stroke="#565656" /><path d="M8 2v6l-4 4a6 6 0 0 1 4-10z" fill="#2e5a35" /></Icon></button>
            <button aria-label="Hyperbolic"><Icon w={16} h={16}><path d="M2 14L13 3M8 3l6-1-1 6" stroke="#6b3a3a" strokeWidth="1.500" /></Icon></button>
          </DockIcons>
          <Menu items={["Channels", "Edit", "Object", "Show"]} h={22} pad={8} />
          <ChannelList />
          <DockRule />
          <TabRow items={["Display", "Render", "Anim"]} on="Display" />
          <LayerBox>
            <Menu items={["Layers", "Options", "Help"]} h={20} pad={7} />
            <LayerIcons $gap={8}>
              {[
                ["Move layer up", <path key="i" d="M12.500 14V7M9.500 9l3-4 3 4z" stroke={t} fill={t} strokeWidth="2" />],
                ["Move layer down", <path key="i" d="M12.500 4v7M9.500 9l3 4 3-4z" stroke={t} fill={t} strokeWidth="2" />],
                ["New empty layer", <path key="i" d="M12.500 0v7M9 3.500h7" stroke={t} strokeWidth="2.500" />],
                ["New layer from selected", <circle key="i" cx="12.500" cy="3.500" r="3.300" fill={t} />],
              ].map(([name, mark]) => (
                <button key={name as string} aria-label={name as string}>
                  <Icon w={16} h={16}><path d="M0 9l8-5 4 3v4l-4 3z" fill={g} />{mark}</Icon>
                </button>
              ))}
            </LayerIcons>
            <LayerList>
              <LayerRow>
                <LayerFlag>V</LayerFlag>
                <LayerFlag>P</LayerFlag>
                <LayerFlag aria-label="Display type" />
                <Icon w={17} h={15}><path d="M1.500 0v15" stroke="#181818" /><path d="M2 14.500L15 .500v14" stroke="#ddd" /></Icon>
                <span>...:Apple_iPad_Pro_2020_11_inch_Space_Grey</span>
              </LayerRow>
            </LayerList>
          </LayerBox>
        </Dock>
        <SideTabs>
          <SideTab $on>Channel Box / Layer Editor</SideTab>
          <SideTab>Attribute Editor</SideTab>
        </SideTabs>
      </Main>

      <Row $h={36} $rule>
        <Grip $h={26} />
        <Ruler>
          <CurrentFrame>1</CurrentFrame>
          {frames.map((f) => (
            <Tick key={f}>{f}</Tick>
          ))}
        </Ruler>
        <Field aria-label="Current time" defaultValue="1" $w={68} $h={18} />
        <SepBox $w={6} />
        {playback.map(([name, icon]) => (
          <IconButton key={name} aria-label={name} $w={23}><Icon>{icon}</Icon></IconButton>
        ))}
        <SepBox $w={7} />
      </Row>

      <Row $h={33}>
        <Grip $h={23} />
        <SepBox $w={1} />
        <Field aria-label="Animation start" defaultValue="1" $w={68} />
        <SepBox $w={8} />
        <Field aria-label="Playback start" defaultValue="1" $w={68} />
        <RangeTrack>
          <RangeBar>
            <RangeHandle aria-label="Range start" />
            1
            <Spacer />
            120
            <RangeHandle aria-label="Range end" />
          </RangeBar>
        </RangeTrack>
        <Field aria-label="Playback end" defaultValue="120" $w={68} />
        <SepBox $w={8} />
        <Field aria-label="Animation end" defaultValue="200" $w={68} />
        <Drop aria-label="Animation layers"><Icon w={10} h={6}><path d="M1 .500h8l-4 5z" fill="#555" stroke="#999" /></Icon></Drop>
        <Field aria-label="Animation layer" defaultValue="No Anim Layer" $w={104} $h={24} $outlined />
        <SepBox $w={5} />
        <Drop aria-label="Character sets"><Icon w={10} h={6}><path d="M1 .500h8l-4 5z" fill="#555" stroke="#999" /></Icon></Drop>
        <Field aria-label="Character set" defaultValue="No Character Set" $w={104} $h={24} $outlined />
        <SepBox $w={2} />
        <IconButton aria-label="Auto keyframe" $w={28}>
          <Icon w={18} h={18} box="0 0 20 20"><path d="M3 5a8.500 8.500 0 0 1 14 1M17 15a8.500 8.500 0 0 1-14-1M18 8v4M2 8v4" stroke={g} strokeWidth="1.300" /><path d="M1 3v4h4zM19 17v-4h-4z" fill={g} /><path d="M6 10h8" stroke={g} strokeWidth="1.500" /><path d="M10 5v10" stroke={C.orange} strokeWidth="2.500" /></Icon>
        </IconButton>
        <SepBox $w={2} />
        <IconButton aria-label="Animation preferences" $w={28}>
          <Icon w={18} h={18} box="0 0 20 20"><Gear x={5.500} y={5.500} r={3} color={g} /><circle cx="16" cy="4.500" r="2" fill={C.orange} /><path d="M8 9l4-2 3 2 4 1M13 8l-3 5 4 2-1 4M10 13l-3 4H4" stroke={C.orange} strokeWidth="2.200" /></Icon>
        </IconButton>
        <SepBox $w={4} />
      </Row>

      <Row $h={33}>
        <Grip $h={23} />
        <Label htmlFor="mel">MEL</Label>
        <Field id="mel" $w={617} />
        <SepBox $w={7} />
        <Field aria-label="Command result" $h={25} readOnly />
        <IconButton aria-label="Script editor" $w={30}>
          <Icon><path d="M1 1h18v18H1z" fill={g} /><path d="M1 4.500h18" stroke="#333" /><path d="M2.500 2.500h1M5 2.500h1M7.500 2.500h1" stroke="#333" /><Glyph x={10} y={15} size={10} color="#333">{"{;}"}</Glyph></Icon>
        </IconButton>
      </Row>

      <Row $h={24} $rule>
        <Grip $h={14} />
        <Hint>Select Tool: select an object</Hint>
      </Row>
    </Shell>
  );
}
